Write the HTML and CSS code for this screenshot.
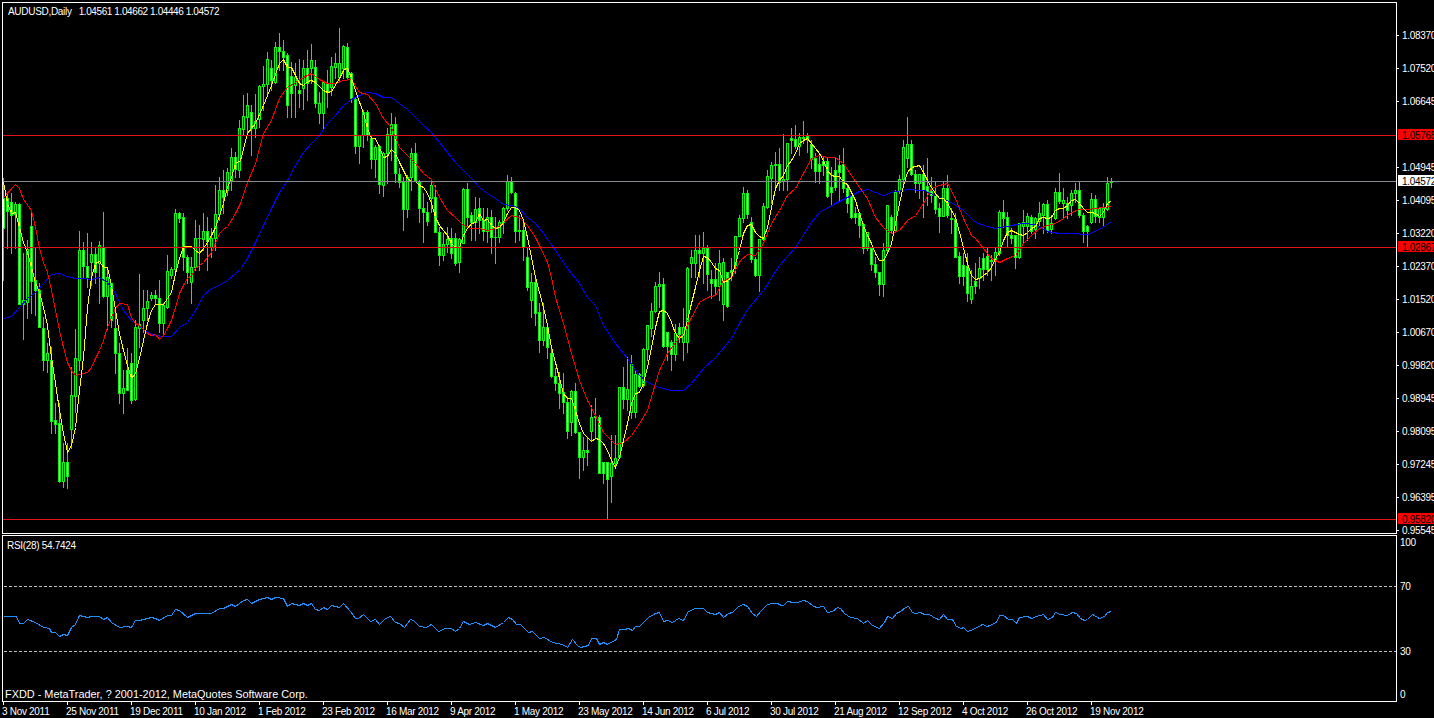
FILE: index.html
```html
<!DOCTYPE html>
<html>
<head>
    <meta charset="utf-8" />
    <title>AUDUSD,Daily</title>
    <link rel="stylesheet" href="styles.css" />
</head>
<body>
    <div class="terminal">
        <div class="pane-row main-row">
            <div class="plot main-plot">
                <svg id="priceChart" class="chart" viewBox="3 3 1393 530" width="1393" height="530"></svg>
                <div class="caption chart-title"><span>AUDUSD,Daily</span><span class="ohlc">1.04561 1.04662 1.04446 1.04572</span></div>
            </div>
            <div class="scale price-scale">
                <div class="price">1.08370</div>
                <div class="price">1.07520</div>
                <div class="price">1.06645</div>
                <div class="price"></div>
                <div class="price">1.04945</div>
                <div class="price">1.04095</div>
                <div class="price">1.03220</div>
                <div class="price">1.02370</div>
                <div class="price">1.01520</div>
                <div class="price">1.00670</div>
                <div class="price">0.99820</div>
                <div class="price">0.98945</div>
                <div class="price">0.98095</div>
                <div class="price">0.97245</div>
                <div class="price">0.96395</div>
                <div class="price">0.95545</div>
                <div class="tag tag-red tag-resist">1.05765</div>
                <div class="tag tag-bid">1.04572</div>
                <div class="tag tag-red tag-pivot">1.02867</div>
                <div class="tag tag-red tag-support">0.95820</div>
            </div>
        </div>
        <div class="pane-row rsi-row">
            <div class="plot rsi-plot">
                <svg id="rsiChart" class="chart" viewBox="3 536 1393 165" width="1393" height="165"></svg>
                <div class="caption rsi-title">RSI(28) 54.7424</div>
                <div class="caption copyright">FXDD - MetaTrader, ? 2001-2012, MetaQuotes Software Corp.</div>
            </div>
            <div class="scale rsi-scale">
                <div>100</div>
                <div>70</div>
                <div>30</div>
                <div>0</div>
            </div>
        </div>
        <div class="time-scale">
            <div class="date">3 Nov 2011</div>
            <div class="date">25 Nov 2011</div>
            <div class="date">19 Dec 2011</div>
            <div class="date">10 Jan 2012</div>
            <div class="date">1 Feb 2012</div>
            <div class="date">23 Feb 2012</div>
            <div class="date">16 Mar 2012</div>
            <div class="date">9 Apr 2012</div>
            <div class="date">1 May 2012</div>
            <div class="date">23 May 2012</div>
            <div class="date">14 Jun 2012</div>
            <div class="date">6 Jul 2012</div>
            <div class="date">30 Jul 2012</div>
            <div class="date">21 Aug 2012</div>
            <div class="date">12 Sep 2012</div>
            <div class="date">4 Oct 2012</div>
            <div class="date">26 Oct 2012</div>
            <div class="date">19 Nov 2012</div>
        </div>
    </div>
    <script src="chart.js"></script>
</body>
</html>
```

FILE: styles.css
```css
html, body {
	margin: 0;
	height: 100%;
	background: #000;
	overflow: hidden;
}

body {
	font-family: "Liberation Sans", Arial, sans-serif;
	font-size: 10px;
	letter-spacing: -0.3px;
	color: #fff;
}

.terminal {
	width: 1434px;
	height: 718px;
	padding-top: 2px;
	box-sizing: border-box;
	display: flex;
	flex-direction: column;
}

.pane-row {
	display: flex;
}

.main-row {
	height: 532px;
	margin-bottom: 1px;
}

.rsi-row {
	height: 167px;
}

.plot {
	position: relative;
	width: 1395px;
	margin-left: 2px;
	flex: none;
	box-sizing: border-box;
	border: 1px solid #fff;
}

.chart {
	display: block;
}

.caption {
	position: absolute;
	white-space: nowrap;
	line-height: 12px;
}

.chart-title {
	left: 5px;
	top: 3px;
}

.ohlc {
	margin-left: 7px;
	letter-spacing: -0.4px;
}

.rsi-title {
	left: 4px;
	top: 4px;
}

.copyright {
	left: 2px;
	top: 152px;
	font-size: 10.9px;
	letter-spacing: 0;
}

/* price axis */
.scale {
	position: relative;
	flex: 1;
}

.price-scale {
	padding-top: 16px;
}

.price {
	position: relative;
	height: 33px;
	line-height: 35px;
	padding-left: 5px;
}

.price:not(:empty)::before {
	content: "";
	position: absolute;
	left: 0;
	top: 17px;
	width: 2px;
	height: 1px;
	background: #fff;
}

.tag {
	position: absolute;
	left: 1px;
	right: -8px;
	height: 11px;
	line-height: 13px;
	padding-left: 4px;
	color: #000;
}

.tag-red {
	background: #f00;
}

.tag-bid {
	background: #fff;
	top: 173px;
}

.tag-resist {
	top: 127px;
}

.tag-pivot {
	top: 239px;
}

.tag-support {
	top: 511px;
}

/* rsi axis */
.rsi-scale {
	display: grid;
	grid-template-rows: 44px 65px 43px 12px;
	padding-top: 2px;
	padding-left: 3px;
	line-height: 12px;
}

/* time axis */
.time-scale {
	display: flex;
	padding-left: 3px;
}

.date {
	position: relative;
	width: 64px;
	flex: none;
	padding-top: 4px;
	line-height: 12px;
	white-space: nowrap;
	text-indent: -1px;
}

.date::before {
	content: "";
	position: absolute;
	left: 0;
	top: 0;
	width: 1px;
	height: 3px;
	background: #fff;
}

/* chart drawing */
.wick, .body {
	fill: #0f0;
	shape-rendering: crispEdges;
}

.fill-down {
	fill: #fff;
	shape-rendering: crispEdges;
}

.fill-up {
	fill: #000;
	shape-rendering: crispEdges;
}

.ma-fast, .ma-mid, .ma-slow, .rsi-line, .level-line {
	fill: none;
	stroke-width: 1;
	shape-rendering: crispEdges;
}

.ma-fast { stroke: #ff0; }
.ma-mid { stroke: #f00; }
.ma-slow { stroke: #00f; }
.rsi-line { stroke: #1e90ff; }

.level-line {
	stroke: #c0c0c0;
	stroke-dasharray: 3 2;
}

.hline-red { fill: #e01414; shape-rendering: crispEdges; }
.hline-bid { fill: #868a90; shape-rendering: crispEdges; }
```

FILE: chart.js
```js
// candles: [high, open, close, low], y values read off 3x crops, so y = top + v / 3
const segments = [
    { top: 170, first: 0, rows: [
        [25,85,175,330],[70,85,122,235],[70,95,135,248],[95,132,102,235],[100,102,402,402],[250,402,390,506],
        [210,395,237,445],[120,168,332,430],[230,330,360,435],[340,360,470,470],[440,475,570,600],[520,570,550,605],
        [530,570,752,790],[700,750,762,790],[700,760,932,935],[820,932,877,950],[820,877,917,955],[590,777,675,835],
        [477,677,565,725],[183,570,240,600],[215,240,287,320],[190,287,320,350],[215,275,253,345],[230,253,305,340],
        [213,280,225,400],[127,230,377,380],[290,377,320,478],[340,340,450,470],[420,475,550,610],[520,550,670,700],
        [600,670,655,728],[535,600,660,660],[550,580,690,700],[450,688,470,690],[312,475,462,530],[360,450,415,485],
        [360,415,393,450],[365,385,375,390],[360,375,385,400],[330,385,458,485],[400,458,405,490],[255,410,303,415],
        [290,315,297,325],[117,298,130,300],[125,130,143,155],[130,142,262,300],[255,262,305,340],[260,335,290,400],
        [150,290,205,300],[165,205,205,300],[128,208,182,240],[140,183,212,300],[175,230,205,260],[45,205,133,240],
        [20,133,60,150],[0,60,82,130]
    ]},
    { top: 0, first: 56, rows: [
        [505,570,517,585],[445,540,472,570],[455,472,507,530],[360,510,385,530]
    ]},
    { top: 20, first: 60, rows: [
        [225,327,287,345],[220,290,255,345],[255,277,325,405],[222,323,303,350],[195,298,198,320],[138,198,192,270],
        [95,192,118,225],[120,145,180,210],[65,185,82,190],[40,82,92,150],[60,92,110,150],[100,105,255,290],
        [125,168,220,290],[130,195,170,290],[118,210,220,260],[120,205,145,268],[90,145,188,240],[72,143,120,190],
        [120,142,250,260],[215,280,250,310],[185,278,185,325],[150,188,215,260],[110,200,138,225],[100,140,130,175],
        [25,170,130,180],[75,145,78,175],[70,82,170,175],[155,160,235,245],[235,238,377,400],[345,377,345,430],
        [270,345,275,380],[270,275,345,360],[345,355,418,445],[375,418,380,470],[375,378,493,520],[395,495,400,527],
        [325,400,343,490],[280,343,313,420],[290,313,460,487],[445,462,485,500],[470,485,568,630],[465,568,472,590],
        [385,472,400,510],[370,400,480,480],[480,487,565,605],[520,565,575,665],[545,575,602,615],[480,533,495,575],
        [495,530,635,635],[620,635,705,735],[640,705,672,720],[620,672,658,695],[625,655,700,715],[640,655,728,735],
        [655,725,658,755],[505,668,508,670],[490,508,592,620],[575,585,605,660],[530,605,568,660],[535,565,600,640],
        [565,600,632,660],[565,632,590,665],[570,590,650,700],[590,650,652,730],[600,652,607,665],[560,605,565,640],
        [465,565,482,570],[470,482,517,520],[515,520,632,665],[585,632,630,660],[600,630,682,720]
    ]},
    { top: 170, first: 131, rows: [
        [230,260,352,360],[310,390,335,440],[320,335,428,465],[400,427,510,545],[400,510,472,525],[465,472,530,565],
        [530,550,617,620],[595,617,640,660],[605,640,668,715],[610,667,697,730],[680,697,782,805],[660,755,663,795],
        [640,663,787,790],[785,787,862,925],[800,862,840,900],[800,840,845,885],[705,782,740,810],[685,738,742,800],
        [735,742,908,910],[875,875,908,940],[875,875,928,1047],[795,917,880,997],[795,880,865,895],[650,862,652,865],
        [590,652,688,715],[560,688,658,720],[555,725,582,745],[600,725,613,740],[610,613,647,650],[535,645,538,650],
        [465,538,465,570],[400,475,422,498],[335,422,348,425],[305,348,343,410],[325,343,527,530],[485,487,527,570],
        [510,515,553,600],[462,553,490,570],[460,472,492,515],[415,515,472,570],[290,515,295,545],[240,280,262,320],
        [195,280,240,320],[195,240,250,320],[185,250,235,340],[225,235,313,360],[300,327,338,385],[280,328,347,370],
        [240,347,278,390],[265,403,275,450],[305,307,407,410],[265,300,305,330],[197,285,198,310],[135,198,145,150],
        [52,145,70,155],[60,70,132,145]
    ]},
    { top: 110, first: 187, rows: [
        [320,335,448,455],[440,448,495,497],[390,495,387,542],[280,387,288,390],[180,290,198,295],[155,203,165,280],
        [125,162,165,240],[115,163,215,240],[72,214,208,240],[117,208,98,240],[55,85,90,130],[45,88,107,115],
        [70,107,82,135],[33,82,85,100],[70,78,85,125],[90,102,147,175],[130,145,182,215],[135,163,182,220],
        [140,152,165,195],[140,152,257,260],[170,232,245,285],[145,180,232,240],[135,165,187,270],[115,163,235,245],
        [225,235,278,305],[255,258,320,325],[290,308,322,340],[310,310,345,380],[340,342,415,430],[365,415,367,420],
        [410,413,462,480],[440,462,487,500],[487,487,523,555],[400,523,420,557],[285,420,285,425],[315,320,360,370],
        [240,360,245,365],[195,240,208,250],[90,208,112,220],[22,145,103,170],[90,102,192,195],[180,192,218,245],
        [195,218,192,265],[165,192,240,320],[145,228,243,285],[200,243,255,275],[215,255,297,310],[280,295,318,367],
        [215,317,235,318],[195,235,315,320],[295,325,327,370],[310,327,440,440],[425,438,497,520],[430,465,497,525],
        [430,468,550,572],[480,567,527,578],[460,512,527,550]
    ]},
    { top: 160, first: 244, rows: [
        [290,355,325,385],[280,293,327,360],[260,287,327,345],[285,300,303,360],[260,300,277,345],[150,280,155,285],
        [120,155,173,200],[155,172,225,262],[205,226,233,250],[225,226,290,323],[190,290,190,295],[150,197,187,245],
        [160,197,168,240],[165,172,213,220],[170,208,175,235],[125,183,160,195],[130,165,133,218],[120,133,210,215],
        [165,208,190,220],[85,175,95,178],[40,95,122,130],[85,128,120,170],[110,128,150,175],[90,135,100,165],
        [70,100,90,125],[65,90,165,170],[160,165,213,245],[195,197,213,262],[100,185,117,188],[105,118,168,185],
        [140,172,145,185],[130,170,145,195],[50,147,70,150],[55,65,67,80]
    ]}
];

const fastMa = [[3,182],[7,203],[11,213],[15,212],[19,227],[23,242],[27,252],[31,267],[35,282],[39,292],[43,307],[47,325],[51,357],[55,383],[59,410],[63,433],[67,452],[71,445],[75,427],[79,390],[83,357],[87,307],[91,277],[95,263],[99,261],[103,267],[107,267],[111,285],[115,310],[119,333],[123,350],[127,365],[131,378],[135,373],[139,358],[143,340],[147,323],[151,310],[155,304],[159,304],[163,304],[167,298],[171,292],[175,273],[179,258],[183,246],[187,246],[191,246],[195,250],[199,253],[203,248],[207,242],[211,235],[215,227],[219,215],[223,203],[227,187],[231,177],[235,163],
    [240,160],[247,133],[255,123],[263,105],[271,85],[279,63],[283,59],[287,67],[291,67],[299,83],[303,85],[307,81],[311,80],[315,82],[323,90],[327,92],[331,91],[339,78],[343,70],[347,67],[351,78],[355,90],[363,113],[367,128],[371,138],[375,138],[379,147],[383,157],[387,156],[391,149],[395,153],[399,162],[403,170],[407,178],[411,181],[415,181],[419,185],[423,187],[427,193],[431,203],[435,217],[439,225],[443,230],[447,235],[451,243],[455,247],[459,247],[463,235],[467,228],[471,223],[475,222],[479,213],[483,220],[487,219],[491,225],[495,228],[499,227],[503,222],[507,213],[511,207],[515,207],[519,210],[523,220],[527,237],[531,257],[535,277],
    [539,292],[543,307],[547,325],[551,347],[555,362],[559,378],[563,393],[567,398],[571,398],[575,410],[579,423],[583,433],[587,437],[591,441],[595,438],[599,439],[603,443],[607,450],[611,460],[615,467],[619,457],[623,440],[627,423],[631,403],[635,393],[639,392],[643,383],[647,367],[651,347],[655,327],[659,311],[663,310],[667,313],[671,322],[675,333],[679,338],[683,335],[687,320],[691,303],[695,287],[699,270],[703,256],[707,257],[711,262],[715,268],[719,270],[723,282],[727,280],[731,277],[735,263],[739,250],[743,233],[747,225],[751,224],
    [755,232],[759,236],[763,238],[767,227],[771,207],[775,188],[779,180],[783,175],[787,165],[791,160],[795,153],[799,143],[803,140],[807,138],[811,143],[815,148],[819,153],[823,160],[827,170],[831,175],[835,176],[839,176],[843,182],[847,184],[851,192],[855,200],[859,213],[863,225],[867,235],[871,243],[875,253],[879,260],[883,260],[887,253],[891,243],[895,223],[899,203],[903,185],[907,172],[911,167],[915,166],[919,165],[923,172],[927,180],[931,187],[935,193],[939,198],[943,198],[947,203],
    [955,217],[963,247],[967,263],[971,275],[975,279],[979,278],[983,275],[987,272],[991,267],[995,258],[999,252],[1003,240],[1007,232],[1011,230],[1015,232],[1019,234],[1023,235],[1027,232],[1031,228],[1035,226],[1039,218],[1043,217],[1047,218],[1051,217],[1055,210],[1059,208],[1063,208],[1067,205],[1071,200],[1075,199],[1079,203],[1083,208],[1087,212],[1091,212],[1095,213],[1099,216],[1103,212],[1107,203],[1111,200]];

const midMa = [[3,197],[15,184],[19,188],[23,199],[31,210],[35,227],[39,248],[43,262],[47,272],[51,290],[55,310],[59,330],[63,347],[67,362],[71,370],[75,375],[79,374],[87,372],[91,367],[95,358],[99,350],[103,340],[107,327],[111,317],[115,308],[119,303],[127,304],[131,317],[135,323],[139,325],[147,333],[151,335],[155,334],[159,339],[163,335],[167,328],[171,320],[175,307],[179,293],[183,285],[187,278],[191,275],[195,268],[199,265],[203,262],[207,257],[211,252],[215,243],[219,233],[223,229],[227,226],[231,220],[235,213],
    [240,203],[247,182],[255,163],[263,133],[271,120],[279,98],[287,87],[295,82],[303,77],[311,73],[319,79],[327,83],[335,83],[343,80],[351,79],[359,92],[367,94],[375,103],[383,118],[391,127],[399,147],[407,155],[415,163],[423,173],[431,179],[439,197],[447,210],[455,217],[463,225],[471,228],[479,228],[487,230],[495,228],[503,222],[511,215],[519,217],[527,225],[535,237],
    [539,245],[547,262],[551,277],[555,297],[563,323],[571,353],[579,380],[587,400],[595,415],[603,432],[615,444],[623,442],[631,435],[639,423],[647,410],[655,383],[659,370],[667,353],[675,342],[683,333],[691,317],[699,302],[707,297],[715,295],[723,280],[731,277],[740,260],[747,254],[755,255],[763,243],[771,223],[779,210],[787,195],[795,188],[803,173],[811,158],[819,155],[827,157],[835,157],[843,163],[851,175],[859,187],[867,198],[875,217],[883,227],[891,233],[899,230],[907,220],[915,215],[923,203],[931,188],[939,185],[947,183],[955,198],[963,218],[971,235],
    [975,238],[983,248],[991,258],[999,262],[1007,258],[1015,255],[1023,243],[1031,235],[1039,228],[1047,225],[1055,223],[1063,218],[1071,212],[1079,209],[1087,209],[1095,208],[1103,207],[1111,206]];

const slowMa = [[3,318],[11,316],[19,307],[27,298],[35,292],[43,283],[51,274],[59,273],[67,276],[75,278],[83,278],[91,279],[99,277],[107,282],[115,293],[123,310],[131,320],[139,326],[147,332],[155,335],[163,336],[171,336],[179,327],[187,322],[195,310],[203,295],[211,288],[219,285],[227,280],[235,273],
    [240,269],[247,258],[255,242],[263,225],[271,208],[279,192],[287,180],[295,165],[303,152],[311,143],[319,135],[327,123],[335,115],[343,105],[351,99],[359,95],[367,92],[375,93],[383,97],[391,97],[399,103],[407,109],[415,117],[423,125],[431,132],[439,142],[447,152],[455,162],[463,170],[471,178],[479,187],[487,193],[495,198],[503,204],[511,205],[519,208],[527,217],[535,223],
    [543,233],[555,250],[567,268],[579,283],[587,297],[595,305],[603,325],[615,343],[627,358],[639,375],[647,382],[659,387],[671,390],[683,390],[691,383],[703,368],[715,357],[731,338],[739,323],[747,309],[763,290],[779,265],[795,247],[811,222],[819,212],[835,203],[847,197],[859,191],[867,189],[875,192],[883,195],[891,192],[907,189],[923,190],[935,195],[947,200],
    [963,210],[975,222],[987,226],[995,228],[1011,225],[1023,223],[1035,224],[1047,231],[1059,233],[1071,233],[1087,234],[1099,229],[1111,221]];

const rsi = [[3,616],[16,616],[19,623],[23,623],[27,619],[35,622],[43,627],[49,628],[51,632],[55,632],[59,636],[63,634],[67,635],[71,627],[75,624],[79,615],[87,617],[91,616],[99,616],[103,619],[107,617],[111,622],[119,627],[127,626],[131,627],[135,620],[139,620],[151,617],[155,618],[159,620],[167,615],[171,615],[175,609],[179,610],[187,617],[195,613],[203,613],[211,613],[219,608],[223,608],[231,604],[235,606],[243,600],[247,599],[251,603],[259,599],[267,597],[271,599],[275,597],[283,598],[287,606],[291,603],[299,605],[303,603],[307,605],[311,603],[315,609],[319,610],[323,607],[327,609],[331,605],[339,607],[343,603],
    [350,611],[355,618],[358,618],[363,614],[370,621],[375,619],[379,624],[385,618],[390,616],[395,622],[399,623],[404,627],[410,619],[413,620],[419,626],[426,627],[431,624],[438,631],[445,628],[451,628],[455,631],[459,628],[463,621],[469,624],[475,622],[483,625],[487,623],[495,627],[503,622],[508,617],[512,619],[516,624],[520,624],[528,632],[532,631],[539,638],[544,637],[552,642],[562,644],[567,647],[572,639],[577,645],[580,647],[588,645],[591,638],[596,638],[599,644],[603,642],[607,644],[616,639],[619,629],[624,629],[628,628],[632,630],[635,626],[639,626],[643,622],[648,617],[655,613],[659,612],[663,621],[667,620],[672,622],[678,618],[683,620],[688,611],[695,608],[703,608],[707,612],[715,614],[719,612],[723,617],[728,613],[732,612],[737,607],
    [740,605],[743,604],[747,606],[752,613],[756,616],[760,611],[767,604],[772,603],[777,603],[781,605],[783,605],[787,601],[793,602],[797,602],[803,600],[807,601],[813,606],[817,607],[823,606],[827,612],[832,611],[837,607],[840,608],[844,613],[850,617],[857,618],[863,623],[867,620],[872,625],[879,628],[884,622],[887,616],[892,618],[896,613],[900,611],[905,607],[908,606],[912,612],[915,613],[920,612],[924,614],[929,614],[935,618],[939,619],[943,614],[947,619],[952,619],[956,626],[961,628],[963,627],[967,631],[973,629],[982,624],[987,626],[996,622],[999,615],[1003,615],[1008,619],[1012,619],[1016,623],[1019,617],[1027,616],[1031,618],[1036,616],[1043,614],[1047,619],[1052,617],[1055,612],[1060,614],[1067,615],[1072,612],[1076,613],[1080,618],[1084,620],[1087,619],[1092,614],[1099,618],[1104,616],[1107,612],[1111,611]];

const NS = "http://www.w3.org/2000/svg";

function add(svg, tag, cls, attrs) {
    let el = document.createElementNS(NS, tag);
    el.setAttribute("class", cls);
    for (let key in attrs) {
        el.setAttribute(key, attrs[key]);
    }
    svg.appendChild(el);
}

function rect(svg, cls, x, y, w, h) {
    add(svg, "rect", cls, { x: x, y: y, width: w, height: h });
}

function line(svg, cls, pts) {
    // half pixel so a 1px stroke stays on one pixel row
    let points = pts.map(p => `${p[0] + 0.5},${p[1] + 0.5}`).join(" ");
    add(svg, "polyline", cls, { points: points });
}

function drawCandle(svg, i, top, row) {
    let x = 3 + 4 * i;
    let [h, o, c, l] = row.map(v => Math.round(top + v / 3));
    let bodyTop = Math.min(o, c);
    let bodyBottom = Math.max(o, c);
    let high = Math.min(h, bodyTop);
    let low = Math.max(l, bodyBottom);
    rect(svg, "wick", x, high, 1, low - high + 1);
    rect(svg, "body", x - 1, bodyTop, 3, bodyBottom - bodyTop + 1);
    if (bodyBottom - bodyTop >= 2) {
        rect(svg, o < c ? "fill-down" : "fill-up", x, bodyTop + 1, 1, bodyBottom - bodyTop - 1);
    }
}

let price = document.getElementById("priceChart");
for (let seg of segments) {
    seg.rows.forEach((row, n) => drawCandle(price, seg.first + n, seg.top, row));
}
line(price, "ma-slow", slowMa);
line(price, "ma-mid", midMa);
line(price, "ma-fast", fastMa);
rect(price, "hline-red", 3, 135, 1393, 1);
rect(price, "hline-bid", 3, 181, 1393, 1);
rect(price, "hline-red", 3, 247, 1393, 1);
rect(price, "hline-red", 3, 519, 1393, 1);

let osc = document.getElementById("rsiChart");
line(osc, "level-line", [[3, 586], [1396, 586]]);
line(osc, "level-line", [[3, 651], [1396, 651]]);
line(osc, "rsi-line", rsi);
```
